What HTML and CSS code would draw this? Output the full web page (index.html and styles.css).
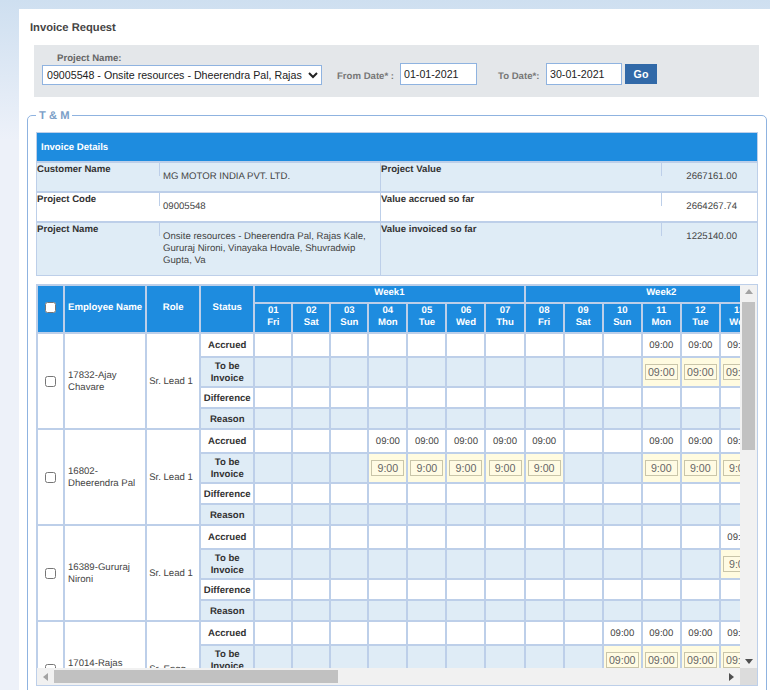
FILE: index.html
```html
<!DOCTYPE html>
<html lang="en">
<head>
  <meta charset="UTF-8" />
  <title>Invoice Request</title>
  <link rel="stylesheet" href="styles.css">
</head>
<body>

  <div class="panel">
    <h1>Invoice Request</h1>

    <form class="filter-bar">
      <div class="project-field">
        <label for="project">Project Name:</label>
        <select id="project">
          <option>09005548 - Onsite resources - Dheerendra Pal, Rajas Kale, Gururaj Nironi, Vinayaka Hovale, Shuvradwip Gupta, Va</option>
        </select>
      </div>
      <label class="date-label from-label" for="from-date">From Date* :</label>
      <input type="text" class="date-input" id="from-date" value="01-01-2021"/>
      <label class="date-label to-label" for="to-date">To Date*:</label>
      <input type="text" class="date-input" id="to-date" value="30-01-2021"/>
      <button type="button" class="go-btn">Go</button>
    </form>

    <fieldset class="tm-box">
      <legend>T &amp; M</legend>

      <div class="details">
        <div class="details-title">Invoice Details</div>
        <div class="details-row">
          <div class="details-label">Customer Name</div>
          <div class="details-text">MG MOTOR INDIA PVT. LTD.</div>
          <div class="details-label">Project Value</div>
          <div class="details-amount">2667161.00</div>
        </div>
        <div class="details-row">
          <div class="details-label">Project Code</div>
          <div class="details-text">09005548</div>
          <div class="details-label">Value accrued so far</div>
          <div class="details-amount">2664267.74</div>
        </div>
        <div class="details-row tall">
          <div class="details-label">Project Name</div>
          <div class="details-text">Onsite resources - Dheerendra Pal, Rajas Kale, Gururaj Nironi, Vinayaka Hovale, Shuvradwip Gupta, Va</div>
          <div class="details-label">Value invoiced so far</div>
          <div class="details-amount">1225140.00</div>
        </div>
      </div>

      <div class="grid-box">
        <div class="grid-view">
          <table id="time-grid">
            <colgroup id="grid-cols"></colgroup>
            <thead id="grid-head"></thead>
            <tbody id="grid-body"></tbody>
          </table>
        </div>
        <div class="vbar">
          <div class="bar-btn"><span class="arrow arrow-up"></span></div>
          <div class="bar-track"><div class="vthumb"></div></div>
          <div class="bar-btn"><span class="arrow arrow-down"></span></div>
        </div>
        <div class="hbar">
          <div class="bar-btn"><span class="arrow arrow-left"></span></div>
          <div class="bar-track"><div class="hthumb"></div></div>
          <div class="bar-btn"><span class="arrow arrow-right"></span></div>
        </div>
        <div class="bar-corner"></div>
      </div>
    </fieldset>
  </div>

  <script src="script.js"></script>
</body>
</html>
```

FILE: styles.css
```css
* {
  box-sizing: border-box;
}
html, body {
  height: 690px;
  overflow: hidden;
}
body {
  margin: 0;
  padding: 9px 0 0 19px;
  font-family: "Liberation Sans", Arial, sans-serif;
  font-size: 9.6px;
  line-height: 12px;
  color: #444;
  text-rendering: geometricPrecision;
  background: #edf1f9 linear-gradient(#cedff0, #edf1f9 140px) no-repeat;
}
.panel {
  height: 681px;
  padding: 12px 3px 0 8px;
  background: #fff;
  overflow: hidden;
}
h1 {
  margin: 0 0 10px 3px;
  font-size: 11.2px;
  line-height: 14px;
  color: #444;
}

/* filter bar */
.filter-bar {
  display: flex;
  align-items: flex-end;
  width: 725px;
  height: 52px;
  margin-left: 7px;
  padding: 0 8px 12px;
  background: #e4e7ea;
}
.project-field {
  display: flex;
  flex-direction: column;
}
.project-field label {
  margin: 0 0 0 15px;
  font-weight: bold;
  color: #666;
}
#project {
  width: 280px;
  height: 20px;
  padding: 0;
  border: 1px solid #8fb3e0;
  border-radius: 0;
  background-color: #fff;
  font-family: "Liberation Sans", Arial, sans-serif;
  font-size: 10.67px;
  color: #222;
}
.date-label {
  margin-bottom: 2px;
  font-weight: bold;
  color: #777;
}
.from-label {
  width: 63px;
  margin-left: 15px;
}
.to-label {
  width: 48px;
  margin-left: 21px;
}
.date-input {
  width: 77px;
  height: 22px;
  padding: 0 3px;
  border: 1px solid #8fb3e0;
  font-family: "Liberation Sans", Arial, sans-serif;
  font-size: 10.67px;
  color: #222;
}
#to-date {
  width: 76px;
}
.go-btn {
  width: 32px;
  height: 20px;
  margin: 0 0 1px 3px;
  padding: 0;
  border: 0;
  background: #3169a8;
  color: #fff;
  font-family: "Liberation Sans", Arial, sans-serif;
  font-size: 10.67px;
  font-weight: bold;
}

/* T & M box */
.tm-box {
  margin: 10px 0 0;
  padding: 9px 8px 8px;
  border: 1px solid #8fb3e0;
  border-radius: 5px;
}
.tm-box legend {
  padding: 2px 3px 0;
  font-size: 11.2px;
  font-weight: bold;
  line-height: 14px;
  color: #7c9fc8;
}

/* invoice details */
.details {
  width: 722px;
  border: 1px solid #bdcfe9;
  background: #bdcfe9;
}
.details-title {
  height: 28px;
  padding-left: 4px;
  background: #1e8cdf;
  color: #fff;
  font-weight: bold;
  line-height: 30px;
}
.details-row {
  display: grid;
  grid-template-columns: 123px 221px 281px 1fr;
  height: 28px;
  margin-top: 2px;
  background: #fff;
}
.details-row:nth-child(even) {
  background: #dfecf6;
}
.details-row.tall {
  height: 52px;
}
.details-label {
  align-self: start;
  height: 13px;
  padding-top: 1px;
  border-right: 1px solid #bdcfe9;
  font-weight: bold;
  color: #333;
}
.details-text {
  padding: 8px 3px 0 3px;
  border-right: 1px solid #bdcfe9;
}
.details-amount {
  padding: 8px 20px 0 0;
  text-align: right;
}

/* time grid */
.grid-box {
  display: grid;
  grid-template-columns: 703px 17px;
  grid-template-rows: 383px 17px;
  width: 722px;
  height: 402px;
  margin-top: 8px;
  border: 1px solid #bdcfe9;
}
.grid-view {
  overflow: hidden;
}
.vbar, .hbar {
  display: flex;
  background: #f1f1f1;
}
.vbar {
  flex-direction: column;
}
.bar-btn {
  display: flex;
  flex: 0 0 17px;
  align-items: center;
  justify-content: center;
}
.bar-track {
  flex: 1;
}
.vthumb {
  width: 13px;
  height: 148px;
  margin-left: 2px;
  background: #c1c1c1;
}
.hthumb {
  width: 284px;
  height: 13px;
  margin-top: 2px;
  background: #c1c1c1;
}
.bar-corner {
  background: #dcdcdc;
}
.arrow {
  width: 0;
  height: 0;
  border: 4px solid transparent;
}
.arrow-up {
  margin-bottom: 4px;
  border-top-width: 0;
  border-bottom: 5px solid #a3a3a3;
}
.arrow-down {
  margin-top: 4px;
  border-bottom-width: 0;
  border-top: 5px solid #505050;
}
.arrow-left {
  border-left-width: 0;
  border-right: 5px solid #a3a3a3;
}
.arrow-right {
  border-right-width: 0;
  border-left: 5px solid #505050;
}

#time-grid {
  width: 1388px;
  margin: -1px 0 0 -1px;
  table-layout: fixed;
  border-collapse: separate;
  border-spacing: 2px;
  background: #bdcfe9;
}
#time-grid th, #time-grid td {
  padding: 2px 0 0;
  text-align: center;
  vertical-align: middle;
}
#time-grid th {
  padding: 0 0 2px;
  background: #1e8cdf;
  color: #fff;
  font-weight: bold;
}
#time-grid th.pick-head {
  padding-bottom: 4px;
}
.week-row th {
  height: 16px;
}
.day-row th {
  height: 28px;
}
#time-grid td {
  background: #fff;
}
#time-grid td.pick-cell, #time-grid td.filled {
  padding: 0;
}
#time-grid .status {
  font-weight: bold;
  color: #333;
}
.row-accrued td {
  height: 22px;
}
.row-invoice td {
  height: 28px;
}
.row-difference td, .row-reason td {
  height: 19px;
}
#time-grid .row-invoice td, #time-grid .row-reason td {
  background: #dfecf6;
}
#time-grid .row-invoice td.filled {
  background: #fffbe0;
}
#time-grid td.employee {
  padding: 2px 8px 0 3px;
  text-align: left;
}
#time-grid td.role {
  padding-left: 2px;
  text-align: left;
}
.pick {
  display: block;
  width: 11px;
  height: 11px;
  margin: 0 auto;
}
.time-input {
  display: block;
  width: 33px;
  height: 16px;
  margin: 0 auto;
  padding: 0;
  border: 1px solid #c9c5a9;
  background: #fffbe3;
  font-family: "Liberation Sans", Arial, sans-serif;
  font-size: 10.67px;
  text-align: center;
  color: #666;
}
```

FILE: script.js
```js
const DAY_NAMES = ['Fri', 'Sat', 'Sun', 'Mon', 'Tue', 'Wed', 'Thu'];
const DAYS_IN_RANGE = 30;

const employees = [
  { name: '17832-Ajay Chavare', role: 'Sr. Lead 1', days: [11, 12, 13], entry: '09:00' },
  { name: '16802-Dheerendra Pal', role: 'Sr. Lead 1', days: [4, 5, 6, 7, 8, 11, 12, 13], entry: '9:00' },
  { name: '16389-Gururaj Nironi', role: 'Sr. Lead 1', days: [13], entry: '9:00' },
  { name: '17014-Rajas Kale', role: 'Sr. Engg', days: [10, 11, 12, 13], entry: '09:00' }
];

function pad(n) {
  return String(n).padStart(2, '0');
}

function renderCols() {
  let html = '';
  [25, 80, 52, 52].forEach(w => {
    html += `<col style="width:${w}px">`;
  });
  for (let d = 1; d <= DAYS_IN_RANGE; d++) {
    html += `<col style="width:${d <= 3 ? 36 : 37}px">`;
  }
  document.getElementById('grid-cols').innerHTML = html;
}

function renderHead() {
  let weeks = '';
  let days = '';
  for (let d = 1; d <= DAYS_IN_RANGE; d += 7) {
    const span = Math.min(7, DAYS_IN_RANGE - d + 1);
    weeks += `<th colspan="${span}">Week${(d + 6) / 7}</th>`;
  }
  for (let d = 1; d <= DAYS_IN_RANGE; d++) {
    days += `<th>${pad(d)}<br>${DAY_NAMES[(d - 1) % 7]}</th>`;
  }
  document.getElementById('grid-head').innerHTML = `
    <tr class="week-row">
      <th rowspan="2" class="pick-head"><input type="checkbox" class="pick"/></th>
      <th rowspan="2">Employee Name</th>
      <th rowspan="2">Role</th>
      <th rowspan="2">Status</th>
      ${weeks}
    </tr>
    <tr class="day-row">${days}</tr>
  `;
}

function dayCells(render) {
  let html = '';
  for (let d = 1; d <= DAYS_IN_RANGE; d++) {
    html += render(d);
  }
  return html;
}

function renderBody() {
  let html = '';
  employees.forEach(emp => {
    const worked = d => emp.days.includes(d);
    html += `
      <tr class="row-accrued">
        <td rowspan="4" class="pick-cell"><input type="checkbox" class="pick"/></td>
        <td rowspan="4" class="employee">${emp.name}</td>
        <td rowspan="4" class="role">${emp.role}</td>
        <td class="status">Accrued</td>
        ${dayCells(d => `<td>${worked(d) ? '09:00' : ''}</td>`)}
      </tr>
      <tr class="row-invoice">
        <td class="status">To be Invoice</td>
        ${dayCells(d => worked(d)
          ? `<td class="filled"><input type="text" class="time-input" value="${emp.entry}"/></td>`
          : '<td></td>')}
      </tr>
      <tr class="row-difference">
        <td class="status">Difference</td>
        ${dayCells(() => '<td></td>')}
      </tr>
      <tr class="row-reason">
        <td class="status">Reason</td>
        ${dayCells(() => '<td></td>')}
      </tr>
    `;
  });
  document.getElementById('grid-body').innerHTML = html;
}

renderCols();
renderHead();
renderBody();
```
